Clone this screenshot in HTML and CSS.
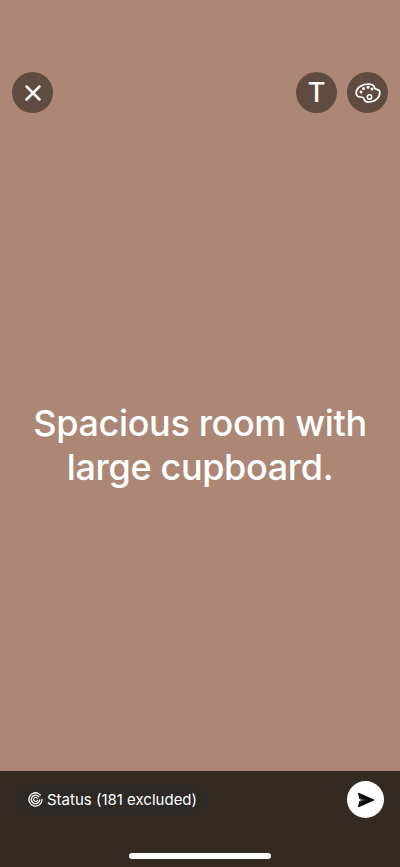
FILE: index.html
```html
<!DOCTYPE html>
<html lang="en">
<head>
<meta charset="utf-8">
<title>Status</title>
<link rel="stylesheet" href="styles.css">
</head>
<body>
<div class="screen">
  <main class="canvas">
    <div class="toolbar">
      <button class="round" aria-label="Close">
        <svg width="20" height="20" viewBox="0 0 20 20"><path d="M3.500 3.500L16.500 16.500M16.500 3.500L3.500 16.500" stroke="#fff" stroke-width="2.500" stroke-linecap="round" fill="none"/></svg>
      </button>
      <div class="tools">
        <button class="round t">T</button>
        <button class="round" aria-label="Colour">
          <svg width="28" height="24" viewBox="0 0 28 24" fill="none"><path d="M14 3.200C7.500 3.200 2.200 7 2.200 11.800c0 2.900 2.100 4.200 4.400 4.200 1.900 0 3.100.5 3.400 2 .4 2 2.200 3 4.800 3 6.500 0 11-4.200 11-9.500 0-1.800-1-2.700-3.200-3.100-1.700-.3-2.100-1-2.300-2.200C20 4.400 17.500 3.200 14 3.200z" stroke="#fff" stroke-width="1.700" stroke-linejoin="round"/><circle cx="7" cy="11" r="1.500" fill="#fff"/><circle cx="9.500" cy="7.500" r="1.500" fill="#fff"/><circle cx="14" cy="6.300" r="1.500" fill="#fff"/><circle cx="18" cy="8" r="1.500" fill="#fff"/><circle cx="15.500" cy="16" r="2.200" stroke="#fff" stroke-width="1.500"/></svg>
        </button>
      </div>
    </div>
    <div class="message">
      <p class="caption">Spacious room with large cupboard.</p>
    </div>
  </main>
  <footer class="composer">
    <div class="row">
      <div class="pill">
        <svg width="15" height="15" viewBox="0 0 16 16" fill="none" stroke="#fff" stroke-linecap="round"><path d="M13.200 3.300A7 7 0 1 0 15 8" stroke-width="1.400" stroke-dasharray="9 1.300 30"/><path d="M11.500 5A4.500 4.500 0 1 0 12.500 8.500" stroke-width="1.500"/><path d="M9.800 6.500A2.200 2.200 0 1 0 10.300 8.500" stroke-width="1.200"/></svg>
        <span>Status (181 excluded)</span>
      </div>
      <button class="send" aria-label="Send">
        <svg width="18" height="16" viewBox="0 0 20 18"><path d="M1.500 1.200L19 9 1.500 16.800 3 10.300l8.500-1.300L3 7.700z" fill="#0b0b0b" stroke="#0b0b0b" stroke-width="1" stroke-linejoin="round"/></svg>
      </button>
    </div>
    <div class="home"></div>
  </footer>
</div>
</body>
</html>
```
FILE: styles.css
```css
* { box-sizing: border-box; }
html, body { margin: 0; padding: 0; }
body { font-family: "Inter", "Liberation Sans", sans-serif; }
.screen {
  width: 400px;
  height: 867px;
  display: flex;
  flex-direction: column;
  overflow: hidden;
}
.canvas {
  height: 771px;
  background: #ac8775;
  padding: 72px 12px 0;
  display: flex;
  flex-direction: column;
}
.toolbar { display: flex; justify-content: space-between; }
.tools { display: flex; gap: 10px; }
.round {
  width: 41px;
  height: 41px;
  border: 0;
  padding: 0;
  border-radius: 50%;
  background: #5f4b3f;
  display: flex;
  align-items: center;
  justify-content: center;
  color: #fff;
}
.t { font: 450 27px "Inter", sans-serif; }
.message {
  height: 376px;
  display: flex;
  align-items: flex-end;
  justify-content: center;
}
.caption {
  margin: 0;
  width: 350px;
  color: #fff;
  font-size: 36px;
  font-weight: 450;
  line-height: 44px;
  text-align: center;
  letter-spacing: -0.35px;
}
.composer {
  flex: 1;
  background: #342a24;
  padding: 10px 16px 8px 15px;
  display: flex;
  flex-direction: column;
  position: relative;
}
.row { display: flex; align-items: center; justify-content: space-between; }
.pill {
  width: 193px;
  height: 30px;
  border-radius: 15px;
  background: #2c2926;
  display: flex;
  align-items: center;
  gap: 4px;
  padding-left: 13px;
  color: #fff;
  font-size: 15px;
}
.send {
  width: 37px;
  height: 37px;
  border: 0;
  padding: 0;
  border-radius: 50%;
  background: #fff;
  display: flex;
  align-items: center;
  justify-content: center;
}
.home {
  width: 142px;
  height: 6px;
  border-radius: 3px;
  background: #fff;
  margin: auto auto 0;
}
```
